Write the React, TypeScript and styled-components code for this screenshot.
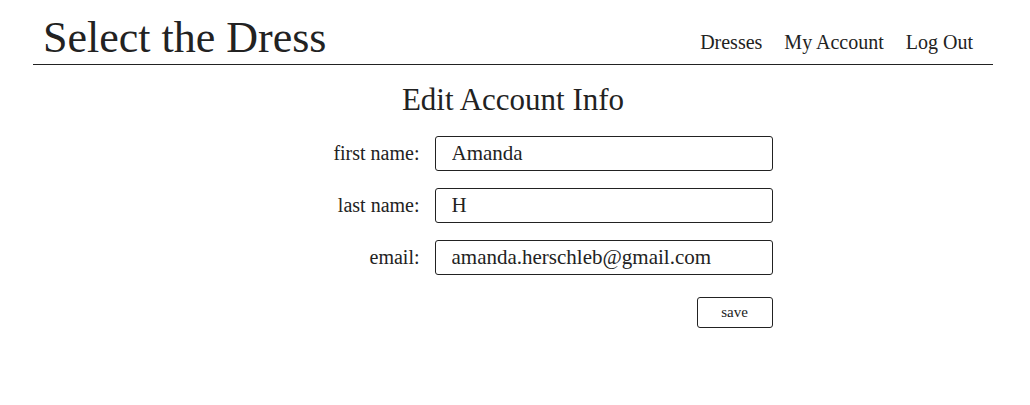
import React from "react";
import styled, { createGlobalStyle } from "styled-components";

const Global = createGlobalStyle`
  html, body { margin: 0; padding: 0; background: #fff; }
  body { font-family: "Liberation Serif", "Times New Roman", serif; color: #222; }
  * { box-sizing: border-box; }
`;

const Page = styled.div`
  width: 960px;
  margin-left: 33px;
`;

const Header = styled.header`
  display: flex;
  align-items: flex-end;
  justify-content: space-between;
  height: 65px;
  border-bottom: 1px solid #222;
  padding: 0 20px 0 10px;
`;

const Brand = styled.h1`
  margin: 0 0 4px;
  font-size: 44px;
  font-weight: 400;
  line-height: 1;
`;

const Nav = styled.nav`
  display: flex;
  gap: 22px;
  margin-bottom: 10px;
`;

const NavLink = styled.a`
  font-size: 20px;
  color: #222;
  text-decoration: none;
`;

const Main = styled.main`
  display: flex;
  flex-direction: column;
  align-items: center;
`;

const Title = styled.h2`
  margin: 16px 0 18px;
  font-size: 31px;
  font-weight: 400;
  line-height: 1.2;
`;

const Form = styled.form`
  display: grid;
  grid-template-columns: 120px 338px;
  column-gap: 15px;
  row-gap: 17px;
  margin-left: 46px;
  align-items: center;
`;

const Label = styled.label`
  text-align: right;
  font-size: 20px;
`;

const Input = styled.input`
  width: 338px;
  height: 35px;
  border: 1px solid #222;
  border-radius: 3px;
  padding: 0 16px;
  font-family: inherit;
  font-size: 21px;
  color: #222;
`;

const Actions = styled.div`
  grid-column: 2;
  display: flex;
  justify-content: flex-end;
  margin-top: 5px;
`;

const Button = styled.button`
  width: 76px;
  height: 31px;
  border: 1px solid #222;
  border-radius: 3px;
  background: #fff;
  font-family: inherit;
  font-size: 15px;
  color: #222;
`;

export default function App() {
  return (
    <>
      <Global />
      <Page>
        <Header>
          <Brand>Select the Dress</Brand>
          <Nav>
            <NavLink href="#">Dresses</NavLink>
            <NavLink href="#">My Account</NavLink>
            <NavLink href="#">Log Out</NavLink>
          </Nav>
        </Header>
        <Main>
          <Title>Edit Account Info</Title>
          <Form onSubmit={(e) => e.preventDefault()}>
            <Label>first name:</Label>
            <Input defaultValue="Amanda" />
            <Label>last name:</Label>
            <Input defaultValue="H" />
            <Label>email:</Label>
            <Input defaultValue="amanda.herschleb@gmail.com" />
            <Actions>
              <Button type="submit">save</Button>
            </Actions>
          </Form>
        </Main>
      </Page>
    </>
  );
}
